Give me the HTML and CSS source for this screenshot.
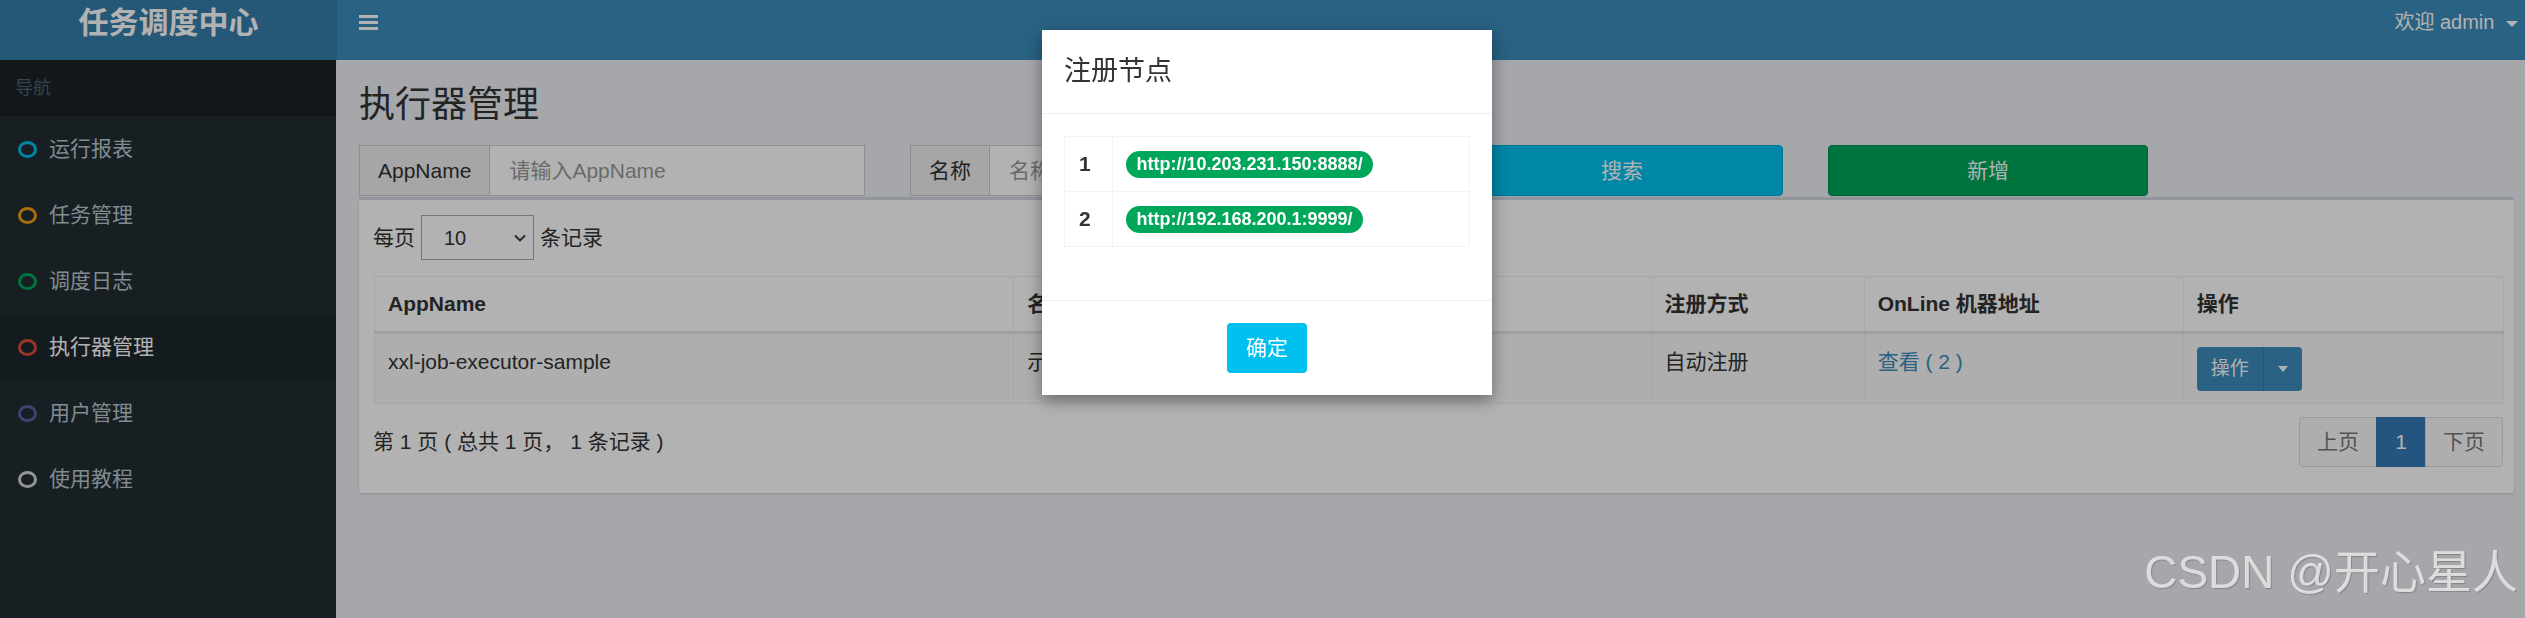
FILE: index.html
```html
<!DOCTYPE html>
<html lang="zh-CN">
<head>
    <meta charset="UTF-8">
    <title>执行器管理</title>
    <link rel="stylesheet" href="styles.css">
</head>
<body>
    <div class="wrapper">
        <header class="main-header">
            <div class="logo">任务调度中心</div>
            <nav class="navbar">
                <span class="toggle"><i></i><i></i><i></i></span>
                <span class="user">欢迎 admin <b class="caret"></b></span>
            </nav>
        </header>
        <div class="main">
            <aside class="sidebar">
                <div class="sidebar-header">导航</div>
                <div class="menu-item"><span class="ring ring-aqua"></span>运行报表</div>
                <div class="menu-item"><span class="ring ring-yellow"></span>任务管理</div>
                <div class="menu-item"><span class="ring ring-green"></span>调度日志</div>
                <div class="menu-item active"><span class="ring ring-red"></span>执行器管理</div>
                <div class="menu-item"><span class="ring ring-purple"></span>用户管理</div>
                <div class="menu-item"><span class="ring ring-gray"></span>使用教程</div>
            </aside>
            <section class="content">
                <h1 class="page-title">执行器管理</h1>
                <div class="search-row">
                    <div class="input-group">
                        <span class="addon">AppName</span>
                        <span class="input placeholder">请输入AppName</span>
                    </div>
                    <div class="input-group">
                        <span class="addon">名称</span>
                        <span class="input placeholder">名称</span>
                    </div>
                    <div class="btn btn-info">搜索</div>
                    <div class="btn btn-success">新增</div>
                </div>
                <div class="box">
                    <div class="length-row">
                        每页
                        <span class="select">10
                            <svg width="12" height="8" viewBox="0 0 12 8"><path d="M1 1.5 L6 6.5 L11 1.5" fill="none" stroke="#333" stroke-width="1.8"/></svg>
                        </span>
                        条记录
                    </div>
                    <table class="data-table">
                        <colgroup>
                            <col class="c-app"><col class="c-name"><col class="c-type"><col class="c-online"><col class="c-op">
                        </colgroup>
                        <thead>
                            <tr><th>AppName</th><th>名称</th><th>注册方式</th><th>OnLine 机器地址</th><th>操作</th></tr>
                        </thead>
                        <tbody>
                            <tr>
                                <td>xxl-job-executor-sample</td>
                                <td>示例执行器</td>
                                <td>自动注册</td>
                                <td><a class="link">查看 ( 2 )</a></td>
                                <td>
                                    <span class="btn-group">
                                        <span class="btn-op">操作</span><span class="btn-op-caret"><b class="caret"></b></span>
                                    </span>
                                </td>
                            </tr>
                        </tbody>
                    </table>
                    <div class="table-footer">
                        <span>第 1 页 ( 总共 1 页， 1 条记录 )</span>
                        <ul class="pagination">
                            <li>上页</li>
                            <li class="active">1</li>
                            <li>下页</li>
                        </ul>
                    </div>
                </div>
            </section>
        </div>
    </div>

    <div class="backdrop"></div>

    <div class="modal">
        <div class="modal-header">注册节点</div>
        <div class="modal-body">
            <table class="node-table">
                <tr><th>1</th><td><span class="badge">http://10.203.231.150:8888/</span></td></tr>
                <tr><th>2</th><td><span class="badge">http://192.168.200.1:9999/</span></td></tr>
            </table>
        </div>
        <div class="modal-footer">
            <span class="btn-ok">确定</span>
        </div>
    </div>

    <div class="watermark">CSDN @开心星人</div>
</body>
</html>
```

FILE: styles.css
```css
body {
    margin: 0; font-family: "Liberation Sans", "Noto Sans CJK SC", sans-serif;
    font-size: 21px; line-height: 30px; color: #333; background: #ecf0f5; overflow: hidden;
}
.wrapper { display: flex; flex-direction: column; height: 100vh; }

/* header */
.main-header { display: flex; height: 60px; }
.logo {
    width: 337px; background: #367fa9; color: #fff; font-weight: bold; font-size: 30px;
    line-height: 45px; text-align: center;
}
.navbar {
    flex: 1; background: #3c8dbc; color: #fff; display: flex; justify-content: space-between;
    align-items: flex-start; padding: 0 7px 0 22px;
}
.toggle { display: flex; flex-direction: column; gap: 3px; width: 19px; padding-top: 15px; }
.toggle i { display: block; height: 3px; background: #fff; }
.user { font-size: 20px; line-height: 45px; }
.caret {
    display: inline-block; width: 0; height: 0; vertical-align: middle; margin-left: 6px;
    border-top: 6px solid #fff; border-left: 6px solid transparent; border-right: 6px solid transparent;
}

/* sidebar */
.main { flex: 1; display: flex; }
.sidebar { width: 337px; background: #222d32; color: #b8c7ce; }
.sidebar-header {
    height: 56px; line-height: 56px; background: #1a2226; color: #4b646f;
    font-size: 18px; padding-left: 15px;
}
.menu-item { height: 66px; display: flex; align-items: center; padding-left: 18px; gap: 12px; }
.menu-item.active { background: #1e282c; color: #fff; }
.ring { width: 19px; height: 17px; box-sizing: border-box; border: 3.5px solid; border-radius: 50%; }
.ring-aqua { border-color: #00c0ef; }
.ring-yellow { border-color: #f39c12; }
.ring-green { border-color: #00a65a; }
.ring-red { border-color: #dd4b39; }
.ring-purple { border-color: #605ca8; }
.ring-gray { border-color: #d2d6de; }

/* content */
.content { flex: 1; padding: 25px 11px 0 23px; }
.page-title { margin: 0 0 20px; font-size: 36px; line-height: 40px; font-weight: normal; }
.search-row { display: flex; gap: 45px; height: 51px; }
.input-group { width: 506px; display: flex; border: 1px solid #ccc; box-sizing: border-box; background: #fff; }
.addon { background: #eee; padding: 0 18px; display: flex; align-items: center; border-right: 1px solid #ccc; }
.input { flex: 1; display: flex; align-items: center; padding: 0 19px; }
.placeholder { color: #999; }
.btn {
    display: flex; align-items: center; justify-content: center; color: #fff; border-radius: 4px;
    box-sizing: border-box; border: 1px solid;
}
.btn-info { width: 322px; background: #00c0ef; border-color: #00acd6; }
.btn-success { width: 320px; background: #00a65a; border-color: #008d4c; }

.box {
    margin-top: 1px; background: #fff; border-top: 3px solid #d2d6de; border-radius: 3px;
    box-shadow: 0 1px 2px rgba(0,0,0,0.15); padding: 15px 11px 26px 14px;
}
.length-row { display: flex; align-items: center; gap: 6px; height: 45px; margin-bottom: 16px; }
.select {
    width: 113px; height: 45px; box-sizing: border-box; border: 1px solid #aaa;
    display: flex; align-items: center; justify-content: space-between; padding: 0 7px 0 22px; font-size: 20px;
}
.data-table { width: 100%; border-collapse: collapse; table-layout: fixed; margin-left: 1px; }
.c-app { width: 639px; }
.c-name { width: 637px; }
.c-type { width: 213px; }
.c-online { width: 319px; }
.c-op { width: 320px; }
.data-table th, .data-table td {
    border: 1px solid #f0f0f0; text-align: left; padding: 12px 13px; vertical-align: top;
    white-space: nowrap; overflow: hidden;
}
.data-table th { border-bottom: 3px solid #e6e6e6; }
.data-table td { padding-top: 13px; background: #f9f9f9; }
.link { color: #3c8dbc; }
.btn-group { display: inline-flex; height: 44px; border-radius: 4px; overflow: hidden; background: #3c8dbc; color: #fff; }
.btn-op { font-size: 19px; padding: 0 14px; display: flex; align-items: center; }
.btn-op-caret { width: 38px; border-left: 1px solid #367fa9; display: flex; align-items: center; justify-content: center; }
.btn-op-caret .caret { margin: 0; border-width: 6px 5px 0; }
.table-footer { display: flex; justify-content: space-between; align-items: center; margin-top: 13px; }
.pagination { display: flex; list-style: none; margin: 0; padding: 0; height: 50px; }
.pagination li {
    display: flex; align-items: center; justify-content: center; border: 1px solid #ddd;
    margin-left: -1px; background: #fafafa; color: #777; padding: 0 17px;
}
.pagination li:first-child { border-radius: 4px 0 0 4px; }
.pagination li:last-child { border-radius: 0 4px 4px 0; }
.pagination .active { background: #337ab7; border-color: #337ab7; color: #fff; width: 50px; padding: 0; box-sizing: border-box; }

/* modal */
.backdrop { position: fixed; inset: 0; background: rgba(0,0,0,0.3); }
.modal {
    position: absolute; top: 30px; left: 1042px; width: 450px; background: #fff;
    box-shadow: 0 5px 15px rgba(0,0,0,0.4);
}
.modal-header { padding: 22px; font-size: 27px; line-height: 39px; border-bottom: 1px solid #eee; }
.modal-body { padding: 22px 22px 22px; }
.node-table { width: 100%; border-collapse: collapse; margin-bottom: 31px; }
.node-table th, .node-table td { border: 1px solid #f4f4f4; padding: 12px 13px; text-align: left; }
.node-table th { width: 20px; padding-left: 14px; }
.badge {
    display: inline-block; background: #00a65a; color: #fff; font-weight: bold; font-size: 18px;
    line-height: 18px; padding: 4.5px 10.5px; border-radius: 14px; vertical-align: 1px;
}
.modal-footer { border-top: 1px solid #eee; padding: 22px; text-align: center; height: 50px; }
.btn-ok {
    display: inline-block; width: 80px; height: 50px; line-height: 50px; background: #00c0ef;
    color: #fff; border-radius: 4px;
}

.watermark {
    position: absolute; right: 7px; top: 542px; font-size: 46px; line-height: 60px;
    color: rgba(240,240,240,0.8); text-shadow: 1px 1px 1px rgba(0,0,0,0.2);
}
```
